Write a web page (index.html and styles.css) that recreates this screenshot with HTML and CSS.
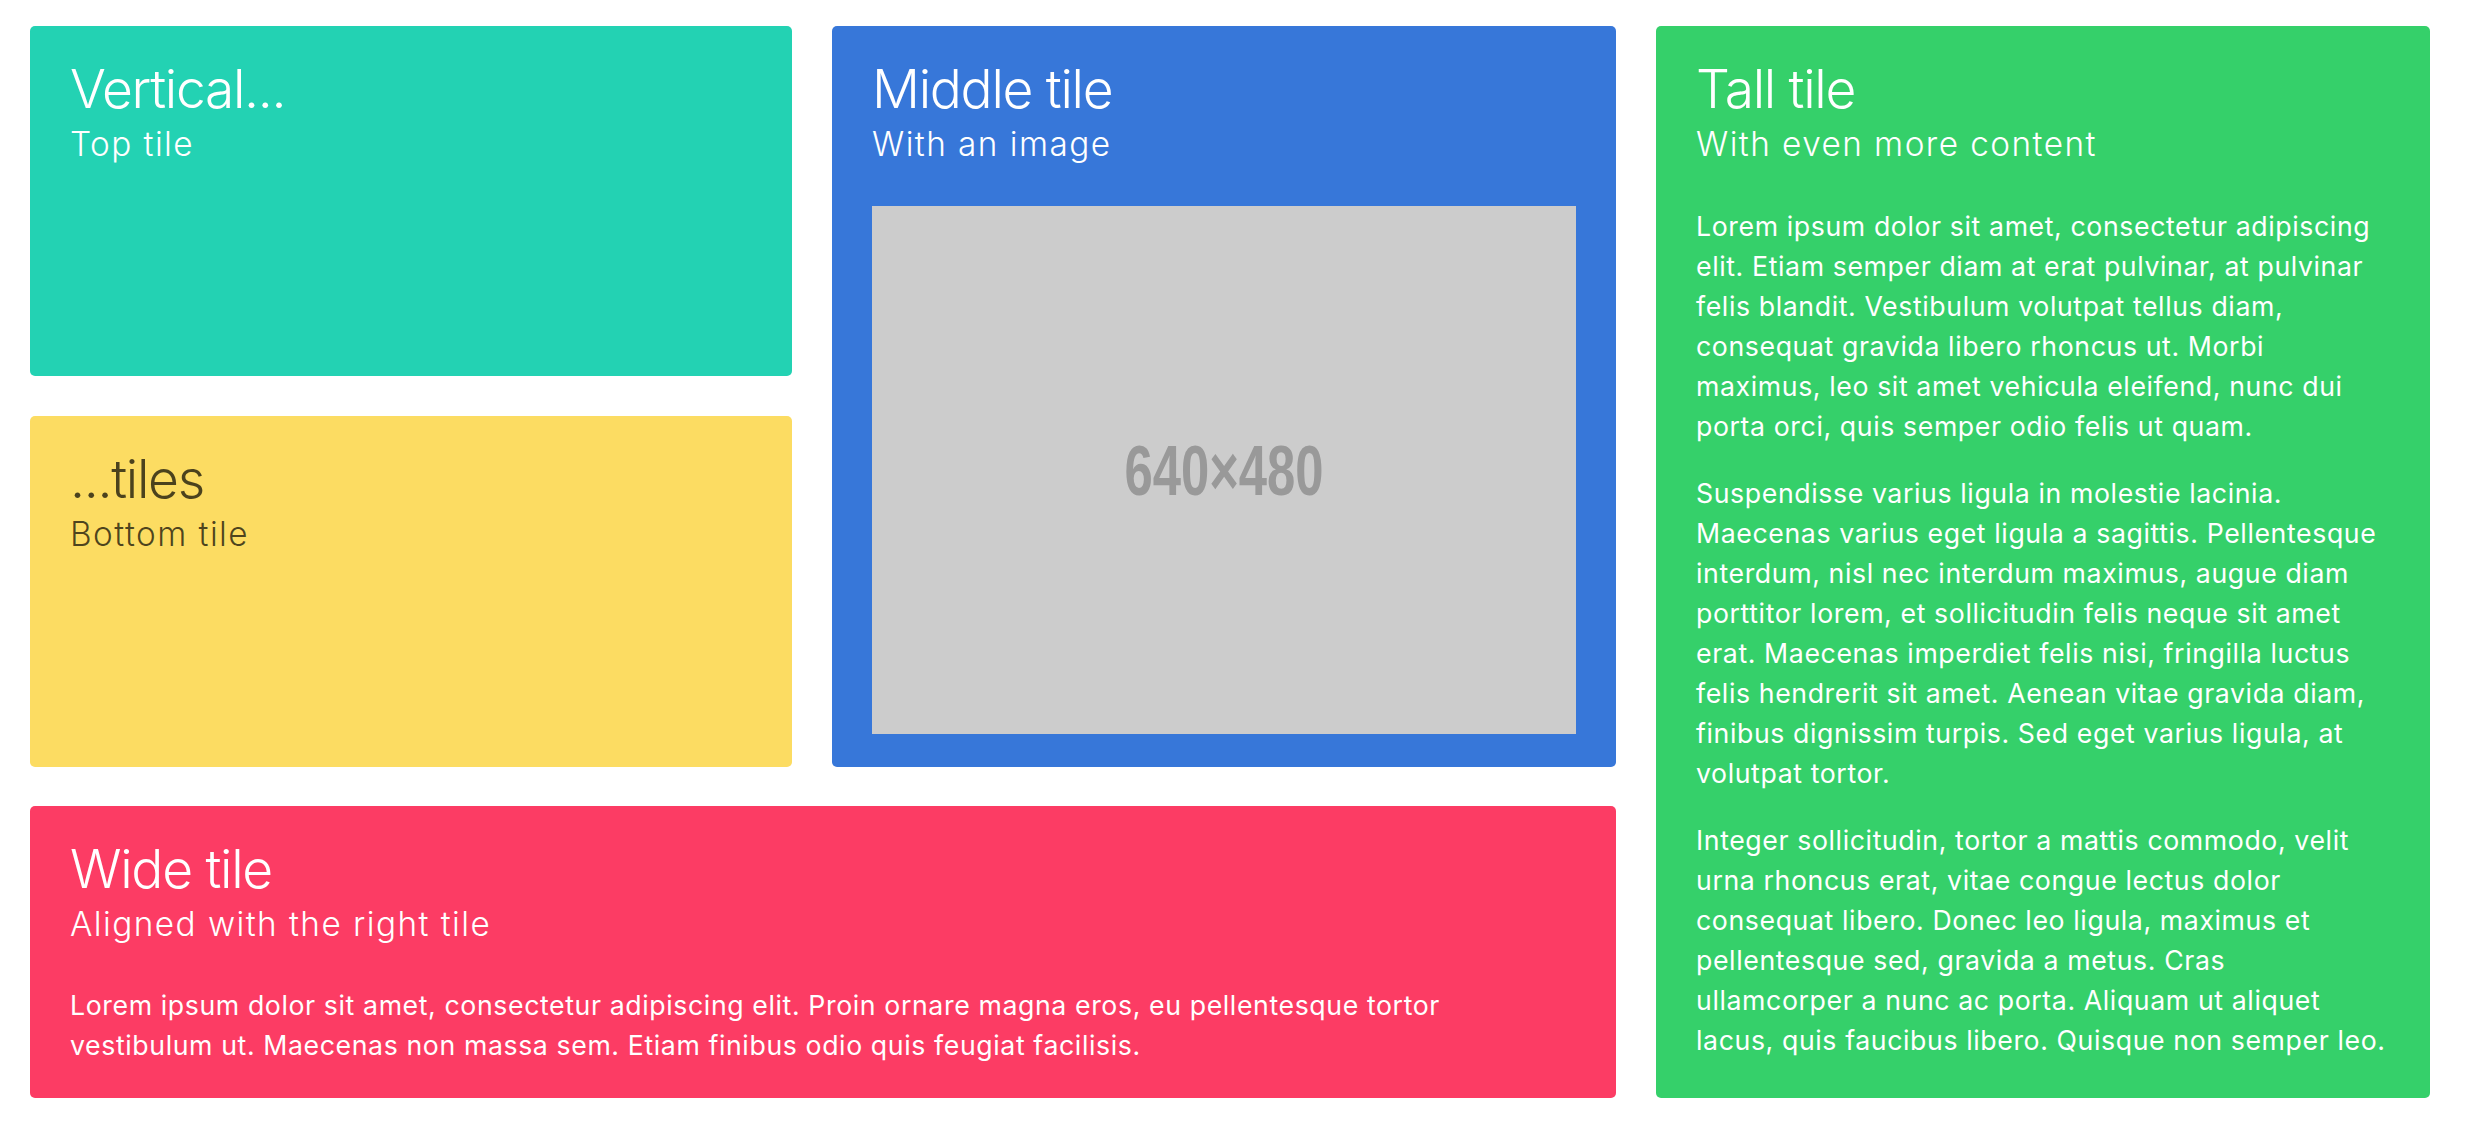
FILE: index.html
```html
<!DOCTYPE html>
<html lang="en">
<head>
<meta charset="utf-8">
<title>Tiles</title>
<link rel="stylesheet" href="styles.css">
</head>
<body>
<div class="tiles">
  <div class="main">
    <div class="top-row">
      <div class="stack">
        <article class="note teal">
          <p class="title">Vertical...</p>
          <p class="subtitle">Top tile</p>
        </article>
        <article class="note yellow">
          <p class="title">...tiles</p>
          <p class="subtitle">Bottom tile</p>
        </article>
      </div>
      <article class="note blue">
        <p class="title">Middle tile</p>
        <p class="subtitle">With an image</p>
        <figure class="image">
          <svg viewBox="0 0 640 480" preserveAspectRatio="none" xmlns="http://www.w3.org/2000/svg">
            <rect width="640" height="480" fill="#cccccc"/>
            <text x="320" y="263" text-anchor="middle" class="ph-text" textLength="181" lengthAdjust="spacingAndGlyphs">640×480</text>
          </svg>
        </figure>
      </article>
    </div>
    <article class="note red">
      <p class="title">Wide tile</p>
      <p class="subtitle">Aligned with the right tile</p>
      <div class="content">
        <p>Lorem ipsum dolor sit amet, consectetur adipiscing elit. Proin ornare magna eros, eu pellentesque tortor vestibulum ut. Maecenas non massa sem. Etiam finibus odio quis feugiat facilisis.</p>
      </div>
    </article>
  </div>
  <article class="note green">
    <p class="title">Tall tile</p>
    <p class="subtitle">With even more content</p>
    <div class="content">
      <p>Lorem ipsum dolor sit amet, consectetur adipiscing elit. Etiam semper diam at erat pulvinar, at pulvinar felis blandit. Vestibulum volutpat tellus diam, consequat gravida libero rhoncus ut. Morbi<br>maximus, leo sit amet vehicula eleifend, nunc dui porta orci, quis semper odio felis ut quam.</p>
      <p>Suspendisse varius ligula in molestie lacinia. Maecenas varius eget ligula a sagittis. Pellentesque interdum, nisl nec interdum maximus, augue diam porttitor lorem, et sollicitudin felis neque sit amet erat. Maecenas imperdiet felis nisi, fringilla luctus felis hendrerit sit amet. Aenean vitae gravida diam, finibus dignissim turpis. Sed eget varius ligula, at volutpat tortor.</p>
      <p>Integer sollicitudin, tortor a mattis commodo, velit urna rhoncus erat, vitae congue lectus dolor consequat libero. Donec leo ligula, maximus et pellentesque sed, gravida a metus. Cras<br>ullamcorper a nunc ac porta. Aliquam ut aliquet<br>lacus, quis faucibus libero. Quisque non semper leo.</p>
    </div>
  </article>
</div>
</body>
</html>
```

FILE: styles.css
```css
html, body {
  margin: 0;
  padding: 0;
  background: #ffffff;
}

body {
  font-family: Inter, "Noto Sans", "Liberation Sans", sans-serif;
  -webkit-font-smoothing: antialiased;
}

.tiles {
  display: grid;
  grid-template-columns: 1586fr 774fr;
  gap: 40px;
  padding: 26px 36px 31px 30px;
}

.main {
  display: grid;
  grid-template-rows: auto auto;
  gap: 39px;
}

.top-row {
  display: grid;
  grid-template-columns: 762fr 784fr;
  gap: 40px;
}

.stack {
  display: grid;
  grid-template-rows: 1fr 1fr;
  gap: 40px;
}

.note {
  margin: 0;
  padding: 33px 40px;
  border-radius: 5px;
  color: #ffffff;
}

.green {
  padding-right: 22px;
}

.teal { background: #23d2b3; }
.yellow { background: #fcdc62; color: rgba(0, 0, 0, 0.7); }
.blue { background: #3777d9; }
.red { background: #fc3c64; }
.green { background: #35d06a; }

.title {
  margin: 0;
  font-size: 53.3px;
  font-weight: 300;
  line-height: 1.125;
  letter-spacing: -1.3px;
}

.subtitle {
  margin: 5px 0 0;
  font-size: 33.3px;
  font-weight: 300;
  line-height: 1.25;
  letter-spacing: 1.45px;
}

.image {
  margin: 40px 0 0;
  display: block;
}

.image svg {
  display: block;
  width: 100%;
  height: auto;
  aspect-ratio: 4 / 3;
}

.ph-text {
  font-family: "Liberation Sans Narrow", "Liberation Sans", sans-serif;
  font-size: 64px;
  font-weight: 700;
  fill: #999999;
}

.content {
  margin-top: 40px;
}

.content p {
  margin: 0 0 26.7px;
  font-size: 26.7px;
  line-height: 1.5;
  font-weight: 400;
  letter-spacing: 0.6px;
}

.content p:last-child {
  margin-bottom: 0;
}
```
